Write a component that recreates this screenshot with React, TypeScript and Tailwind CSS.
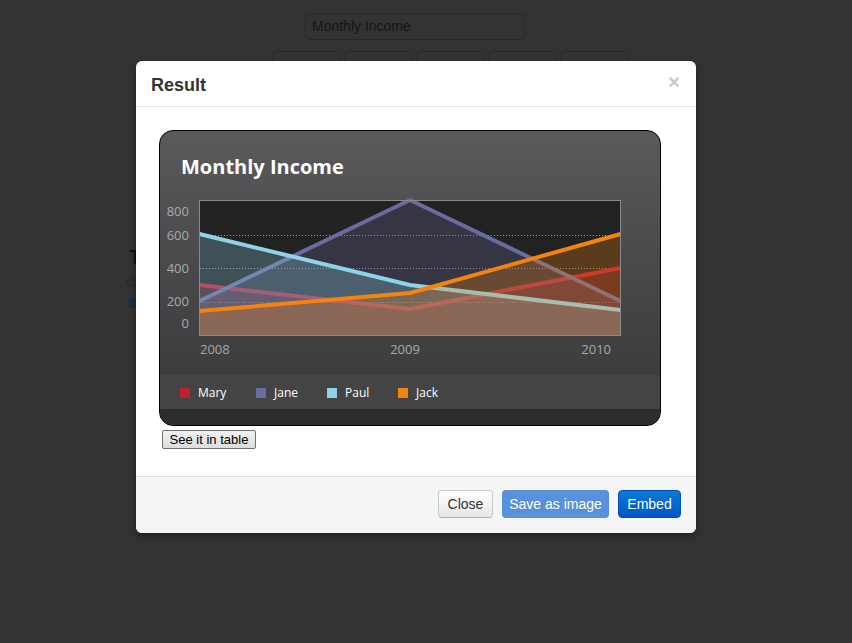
import React from 'react'

const chartFont = { fontFamily: '"Open Sans", "DejaVu Sans", sans-serif' }

const series = [
  { name: 'Mary', color: '#c41f2f', pts: [95, 119, 78] },
  { name: 'Jane', color: '#6a6b9f', pts: [111, 10, 111] },
  { name: 'Paul', color: '#8ed3e9', pts: [44, 95, 120] },
  { name: 'Jack', color: '#f5830f', pts: [121, 103, 44] },
]

const xs = [39.5, 250, 460.5]
const base = 145.5

function Chart() {
  return (
    <svg width="500" height="175" viewBox="0 0 500 175" className="block">
      <rect x="39.5" y="10.5" width="421" height="135" fill="#222" />
      {[45.5, 78.5, 112.5].map((y) => (
        <line key={y} x1="40" x2="460" y1={y} y2={y} stroke="#9a9a9a" strokeWidth="1" strokeDasharray="1 2" />
      ))}
      {series.map((s) => {
        const line = s.pts.map((p, i) => `${xs[i]},${p}`).join(' ')
        return (
          <g key={s.name}>
            <polygon points={`${xs[0]},${base} ${line} ${xs[2]},${base}`} fill={s.color} fillOpacity="0.27" />
            <polyline points={line} fill="none" stroke={s.color} strokeWidth="4" strokeLinejoin="round" />
          </g>
        )
      })}
      <rect x="39.5" y="10.5" width="421" height="135" fill="none" stroke="#8a8a8a" strokeWidth="1" />
      <g fill="#a9a9a9" fontSize="13" style={chartFont}>
        <text x="29" y="26" textAnchor="end">800</text>
        <text x="29" y="50" textAnchor="end">600</text>
        <text x="29" y="83" textAnchor="end">400</text>
        <text x="29" y="116" textAnchor="end">200</text>
        <text x="29" y="138" textAnchor="end">0</text>
        <text x="40" y="164">2008</text>
        <text x="245" y="164" textAnchor="middle">2009</text>
        <text x="451" y="164" textAnchor="end">2010</text>
      </g>
    </svg>
  )
}

export default function App() {
  return (
    <div className="relative w-[852px] h-[643px] bg-[#333] overflow-hidden" style={{ fontFamily: '"Liberation Sans", Arial, sans-serif' }}>
      {/* page under the overlay */}
      <div className="pt-[13px]">
        <div className="ml-[305px] w-[220px] h-[27px] border border-[#292929] rounded-[4px] px-[6px] text-[14px] leading-[25px] text-[#151515]">
          Monthly Income
        </div>
        <div className="mt-[11px] ml-[272px] flex gap-[4px]">
          {['Mary', 'Jane', 'Paul', 'Jack', 'Add'].map((b) => (
            <div key={b} className="w-[68px] h-[30px] border border-[#292929] rounded-[4px] bg-[#343434] pl-[5px] pt-[5px] text-[14px] text-[#151515]">
              {b}
            </div>
          ))}
        </div>
        <div className="ml-[129px] mt-[164px] w-fit text-[20px] font-bold leading-[24px] text-[#141414]">T</div>
        <div className="ml-[127px] mt-[8px] flex flex-col gap-[11px]">
          <div className="w-[10px] h-[10px] rounded-full border border-[#262626] bg-[#303030]" />
          <div className="w-[10px] h-[10px] rounded-full border border-[#1f2a33] bg-[#1d3340]" />
        </div>
      </div>

      {/* modal */}
      <div className="absolute left-[136px] top-[61px] w-[560px] h-[472px] bg-white rounded-[6px] overflow-hidden shadow-[0_3px_7px_rgba(0,0,0,0.4)] flex flex-col">
        <div className="h-[46px] shrink-0 border-b border-[#e5e5e5] flex items-center justify-between pl-[15px] pr-[16px]">
          <div className="text-[18px] font-bold text-[#333] leading-[20px] pt-[2px]">Result</div>
          <div className="text-[20px] font-bold text-[#c9c9c9] leading-[20px] -mt-[4px]">×</div>
        </div>
        <div className="flex-1 pl-[23px] pt-[23px]">
          <div
            className="w-[502px] h-[296px] rounded-[14px] border border-black overflow-hidden bg-[linear-gradient(to_bottom,#5a5a5c,#444446_60%,#383838)]"
            style={chartFont}
          >
            <div className="h-[59px] pl-[21px] pt-[23px] text-[20px] font-bold leading-[26px] text-white">Monthly Income</div>
            <Chart />
            <div className="h-[10px]" />
            <div className="h-[34px] bg-[#444] flex items-center pl-[20px] pt-[2px] text-[12px] text-white">
              {series.map((s, i) => (
                <div key={s.name} className={`flex items-center ${i === 0 ? 'w-[76px]' : 'w-[71px]'}`}>
                  <div className="w-[10px] h-[10px] mr-[8px] -mt-[1px]" style={{ background: s.color }} />
                  <span>{s.name}</span>
                </div>
              ))}
            </div>
            <div className="h-[16px] bg-[#2d2d2d]" />
          </div>
          <button className="mt-[4px] ml-[3px] w-[94px] h-[19px] border border-[#707070] rounded-[2px] bg-[linear-gradient(to_bottom,#f2f2f2,#dddddd)] text-[13px] leading-[17px] text-black">
            See it in table
          </button>
        </div>
        <div className="h-[57px] shrink-0 border-t border-[#dddddd] bg-[#f5f5f5] flex items-start justify-end gap-[9px] pr-[15px] pt-[13px]">
          <button className="w-[55px] h-[28px] rounded-[4px] border border-[#c8c8c8] border-b-[#b0b0b0] bg-[linear-gradient(to_bottom,#ffffff,#e6e6e6)] text-[14px] text-[#333]">
            Close
          </button>
          <button className="w-[107px] h-[28px] rounded-[4px] bg-[#5890db] text-[14px] text-white">
            Save as image
          </button>
          <button className="w-[63px] h-[28px] rounded-[4px] border border-[#0050b8] bg-[linear-gradient(to_bottom,#0a7ad6,#0055c4)] text-[14px] text-white">
            Embed
          </button>
        </div>
      </div>
    </div>
  )
}
